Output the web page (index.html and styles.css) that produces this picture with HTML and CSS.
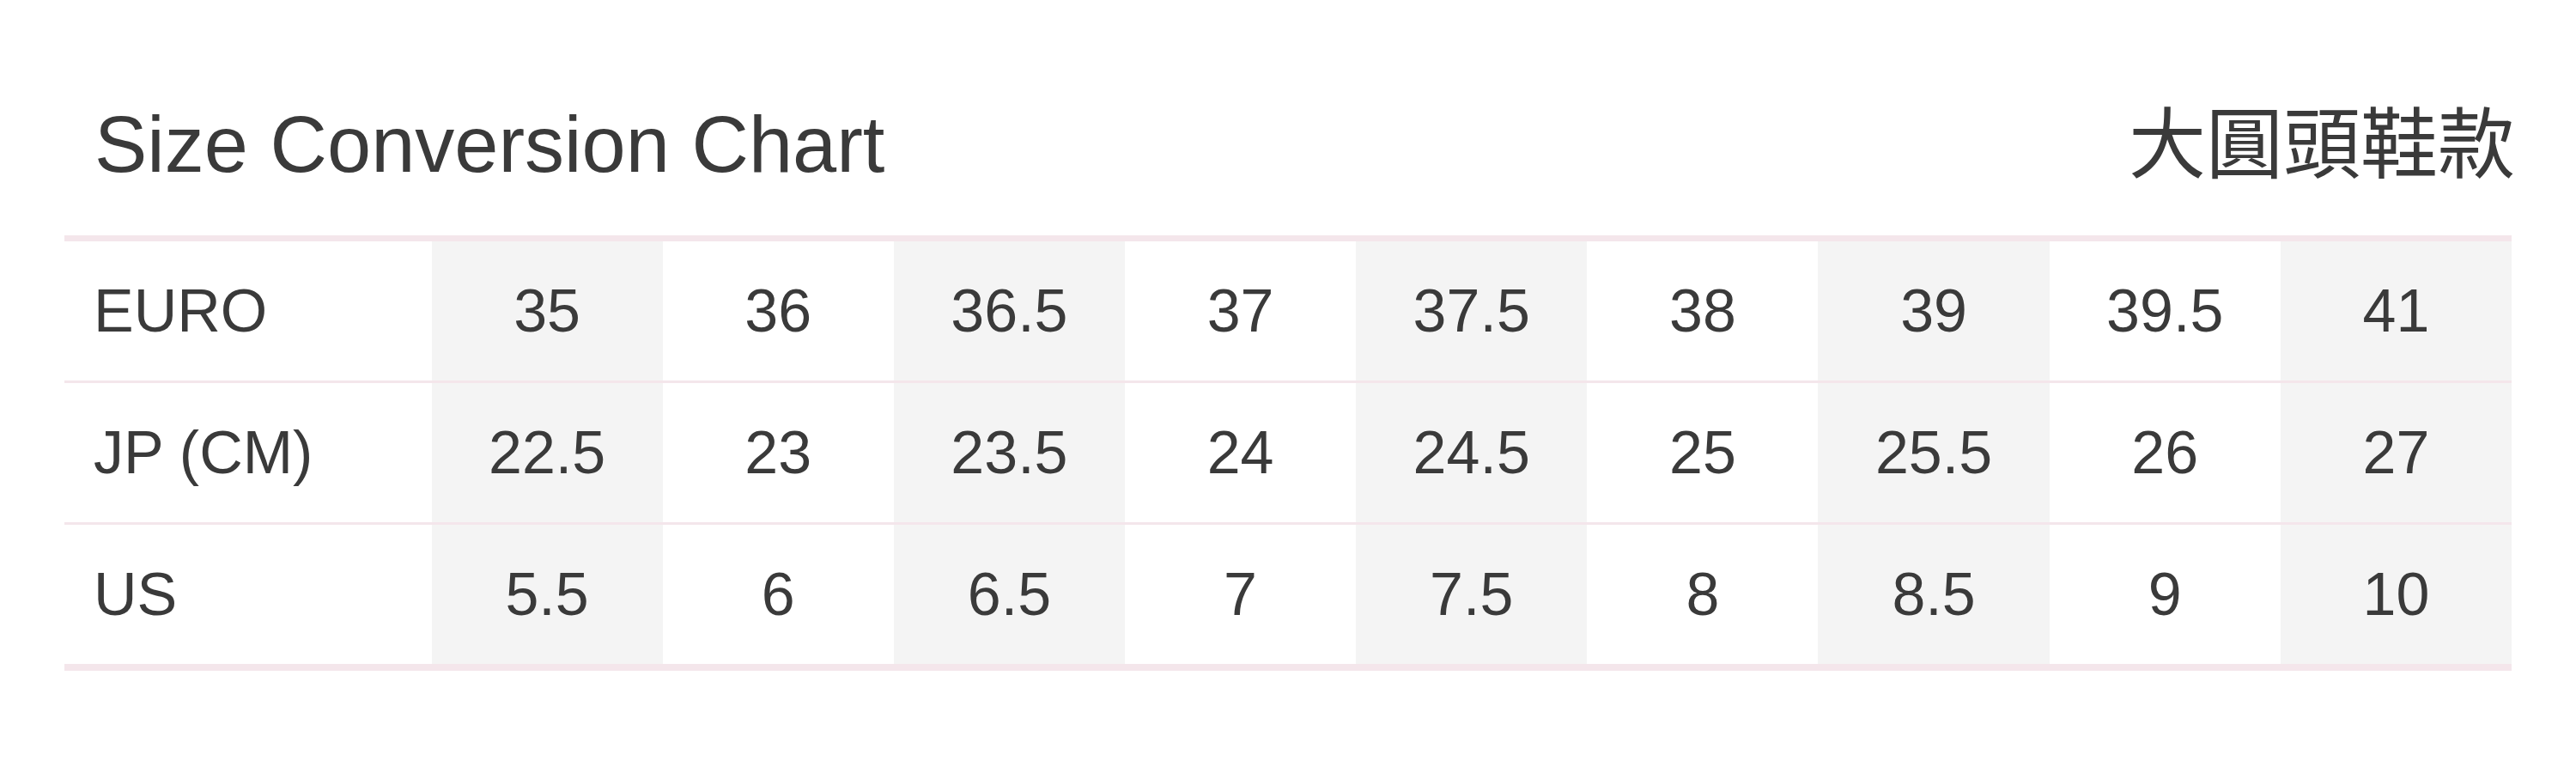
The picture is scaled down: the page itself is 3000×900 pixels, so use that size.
FILE: index.html
```html
<!DOCTYPE html>
<html lang="zh-Hant">
<head>
<meta charset="utf-8">
<title>Size Conversion Chart</title>
<link rel="stylesheet" href="styles.css">
</head>
<body>
<section class="chart">
  <header class="chart-head">
    <h1 class="chart-title">Size Conversion Chart</h1>
    <h2 class="chart-style">大圓頭鞋款</h2>
  </header>
  <div class="size-table" role="table">
    <div class="size-row" role="row">
      <div class="cell label" role="rowheader">EURO</div>
      <div class="cell" role="cell">35</div>
      <div class="cell" role="cell">36</div>
      <div class="cell" role="cell">36.5</div>
      <div class="cell" role="cell">37</div>
      <div class="cell" role="cell">37.5</div>
      <div class="cell" role="cell">38</div>
      <div class="cell" role="cell">39</div>
      <div class="cell" role="cell">39.5</div>
      <div class="cell" role="cell">41</div>
    </div>
    <div class="size-row" role="row">
      <div class="cell label" role="rowheader">JP (CM)</div>
      <div class="cell" role="cell">22.5</div>
      <div class="cell" role="cell">23</div>
      <div class="cell" role="cell">23.5</div>
      <div class="cell" role="cell">24</div>
      <div class="cell" role="cell">24.5</div>
      <div class="cell" role="cell">25</div>
      <div class="cell" role="cell">25.5</div>
      <div class="cell" role="cell">26</div>
      <div class="cell" role="cell">27</div>
    </div>
    <div class="size-row" role="row">
      <div class="cell label" role="rowheader">US</div>
      <div class="cell" role="cell">5.5</div>
      <div class="cell" role="cell">6</div>
      <div class="cell" role="cell">6.5</div>
      <div class="cell" role="cell">7</div>
      <div class="cell" role="cell">7.5</div>
      <div class="cell" role="cell">8</div>
      <div class="cell" role="cell">8.5</div>
      <div class="cell" role="cell">9</div>
      <div class="cell" role="cell">10</div>
    </div>
  </div>
</section>
</body>
</html>
```

FILE: styles.css
```css
html, body {
  margin: 0;
  padding: 0;
  background: #ffffff;
}

body {
  color: #3a3a3a;
  font-family: "Liberation Sans", Arial, "Noto Sans CJK TC", sans-serif;
}

.chart {
  width: 2850px;
  margin-left: 75px;
  padding-top: 106px;
}

.chart-head {
  display: flex;
  justify-content: space-between;
  align-items: baseline;
  padding-left: 35px;
  height: 117px;
  margin-bottom: 51px;
}

.chart-title {
  margin: 0;
  font-weight: normal;
  font-size: 92px;
  line-height: 110px;
  font-family: "Liberation Sans", Arial, sans-serif;
}

.chart-style {
  margin: 0;
  font-weight: normal;
  font-size: 90px;
  line-height: 110px;
  font-family: "Noto Sans CJK TC", "Noto Sans CJK SC", sans-serif;
  margin-right: -4px;
}

.size-table {
  border-top: 7px solid #f4e6eb;
  border-bottom: 8px solid #f4e6eb;
}

.size-row {
  display: grid;
  grid-template-columns: 15% repeat(9, 1fr);
  height: 162px;
}

.size-row + .size-row {
  border-top: 3px solid #f4e6eb;
}

.cell {
  display: flex;
  align-items: center;
  justify-content: center;
  font-size: 70px;
  line-height: 1;
}

.cell:nth-child(even) {
  background: #f4f4f4;
}

.cell.label {
  justify-content: flex-start;
  padding-left: 34px;
}
```
